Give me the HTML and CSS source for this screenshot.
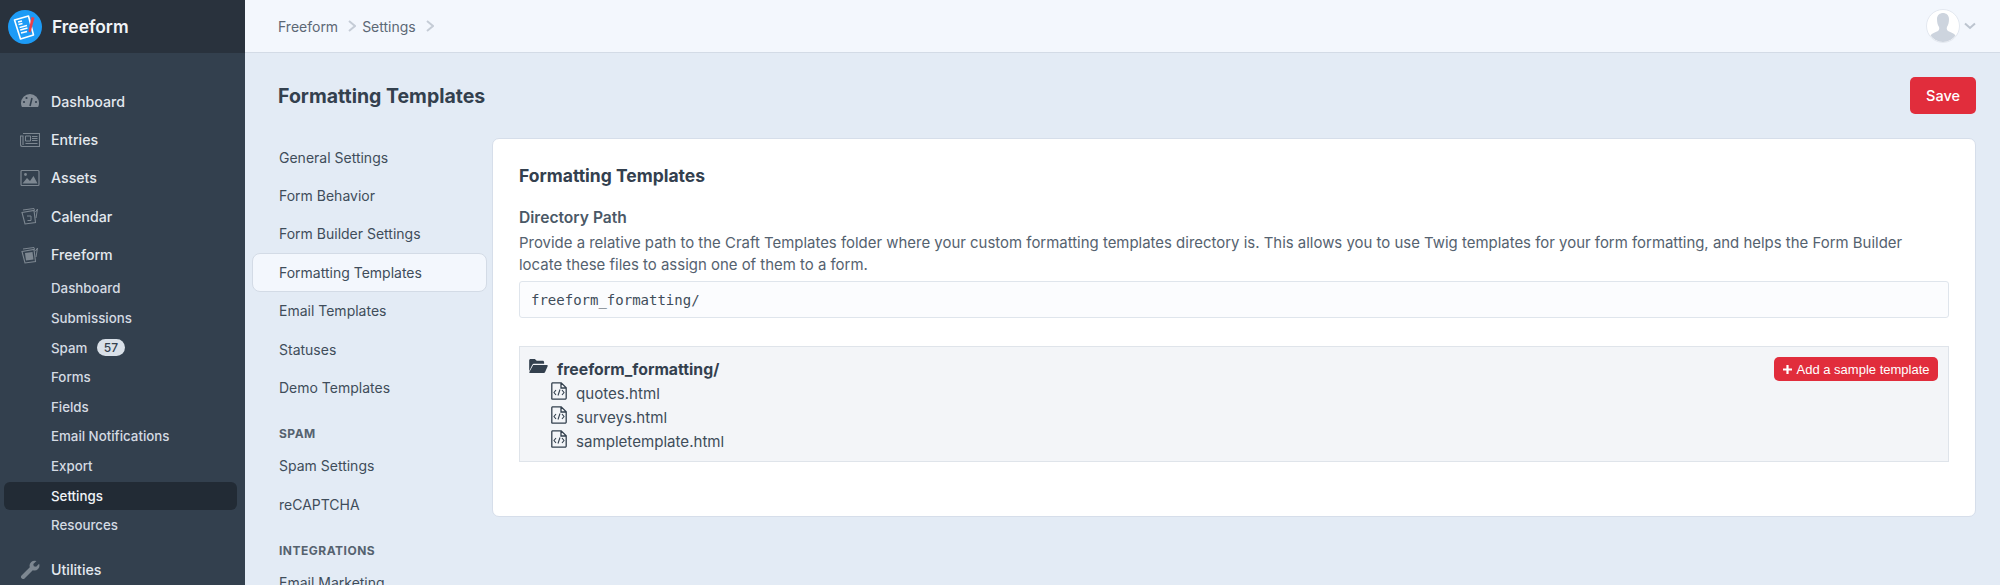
FILE: index.html
```html
<!doctype html>
<html lang="en">
<head>
    <title>Formatting Templates</title>
    <link rel="stylesheet" href="styles.css">
</head>
<body>
    <div class="app">
        <aside class="sidebar">
            <div class="brand">
                <svg class="logo" viewBox="0 0 34 34">
                    <circle cx="17" cy="17" r="17" fill="#1d9bf6"/>
                    <path d="M6.5 10 20.5 6 25.5 25 12.500 29z" fill="#1d9bf6" stroke="#fff" stroke-width="1.6" stroke-linejoin="round"/>
                    <path d="M10 12 14 11M10.500 14.500 14.500 13.500M11.500 17.500 19 15.500M12.200 20 19.500 18M13 23 19 21.500" stroke="#fff" stroke-width="1.3"/>
                    <path d="M23.500 7 26.500 7.800 22.500 22.500 20.500 21.500z" fill="#e8404a"/>
                </svg>
                <span class="brand-name">Freeform</span>
            </div>
            <nav class="main-nav">
                <a class="nav-item">
                    <svg class="nav-icon" viewBox="0 0 20 20"><path d="M10 3a9 9 0 0 0-9 9c0 1.500.4 3 1 4h16c.6-1 1-2.500 1-4a9 9 0 0 0-9-9z" fill="#858e98"/><path d="M10 15 12 7" stroke="#33404e" stroke-width="1.6"/><circle cx="4" cy="11" r="1.1" fill="#33404e"/><circle cx="6.500" cy="7" r="1.1" fill="#33404e"/><circle cx="16" cy="11" r="1.1" fill="#33404e"/></svg>
                    Dashboard
                </a>
                <a class="nav-item">
                    <svg class="nav-icon" viewBox="0 0 20 20"><path d="M3 3.500h16.500v13H2.500a2 2 0 0 1-2-2V6H3v9" fill="none" stroke="#7d8791" stroke-width="1.1"/><path d="M5.500 6h5v5h-5z" fill="none" stroke="#7d8791"/><path d="M12 6.500h5.500M12 8.500h5.500M12 10.500h5.500M5.500 13.500h12" stroke="#7d8791"/></svg>
                    Entries
                </a>
                <a class="nav-item">
                    <svg class="nav-icon" viewBox="0 0 20 20"><rect x="1" y="2.500" width="18" height="15" rx="1" fill="none" stroke="#7d8791" stroke-width="1.2"/><path d="M2.500 15.500 7 10l3 3 3.500-5 4 7.500z" fill="#7d8791"/><circle cx="5.500" cy="6.500" r="1.4" fill="#7d8791"/></svg>
                    Assets
                </a>
                <a class="nav-item">
                    <svg class="nav-icon" viewBox="0 0 20 20"><path d="M2 6.500 14 4.500 15.500 16.500 5 18z" fill="none" stroke="#7d8791" stroke-width="1.1"/><path d="M3 4 14 2.500 14.500 4.500M15.500 6 17.500 3 16 12" fill="none" stroke="#7d8791"/><path d="M7 10h4v4.500H7.500" fill="none" stroke="#7d8791"/></svg>
                    Calendar
                </a>
                <a class="nav-item">
                    <svg class="nav-icon" viewBox="0 0 20 20"><path d="M2 6.500 14 4.500 15.500 16.500 5 18z" fill="none" stroke="#7d8791" stroke-width="1.1"/><path d="M3 4 14 2.500 14.500 4.500M15.500 6 17.500 3 16 12" fill="none" stroke="#7d8791"/><path d="M5 8 12.500 7 13.500 14.500 6 15.500z" fill="#7d8791"/></svg>
                    Freeform
                </a>
            </nav>
            <nav class="sub-nav">
                <a class="sub-item">Dashboard</a>
                <a class="sub-item">Submissions</a>
                <a class="sub-item">Spam <span class="badge">57</span></a>
                <a class="sub-item">Forms</a>
                <a class="sub-item">Fields</a>
                <a class="sub-item">Email Notifications</a>
                <a class="sub-item">Export</a>
                <a class="sub-item sub-active">Settings</a>
                <a class="sub-item">Resources</a>
            </nav>
            <a class="nav-item nav-utilities">
                <svg class="nav-icon" viewBox="0 0 20 20"><path d="M1.500 16.500 9.800 8.200a5 5 0 0 1 6.700-6.100L13.300 5l.5 2.300 2.300.5 3-3.100a5 5 0 0 1-6.300 6.500l-8 8a2 2 0 0 1-3.300-2.700z" fill="#7d8791"/></svg>
                Utilities
            </a>
        </aside>

        <div class="main">
            <header class="topbar">
                <div class="crumbs">
                    <span>Freeform</span>
                    <svg class="crumb-sep" viewBox="0 0 8 12"><path d="M1 1 7 6l-6 5" fill="none" stroke="#c5ccd6" stroke-width="2"/></svg>
                    <span>Settings</span>
                    <svg class="crumb-sep" viewBox="0 0 8 12"><path d="M1 1 7 6l-6 5" fill="none" stroke="#c5ccd6" stroke-width="2"/></svg>
                </div>
                <div class="user">
                    <svg class="avatar" viewBox="0 0 34 34">
                        <circle cx="17" cy="17" r="16.500" fill="#fff" stroke="#e3e8f0"/>
                        <path d="M11 10c0-4 3-6 6-6s6 2 6 6c0 3-.6 6-2 8-.5 1-.4 3 1 4 3 1.600 6 2 7.500 4.500A16 16 0 0 1 17 33 16 16 0 0 1 4.500 26.500C6 24 9 23.600 12 22c1.400-1 1.500-3 1-4-1.400-2-2-5-2-8z" fill="#cdd4de"/>
                    </svg>
                    <svg class="caret" viewBox="0 0 12 8"><path d="M1 1.500 6 6l5-4.500" fill="none" stroke="#bcc4cf" stroke-width="2"/></svg>
                </div>
            </header>

            <div class="page-head">
                <h1>Formatting Templates</h1>
                <button class="btn-save">Save</button>
            </div>

            <div class="content">
                <nav class="settings-nav">
                    <a class="set-item">General Settings</a>
                    <a class="set-item">Form Behavior</a>
                    <a class="set-item">Form Builder Settings</a>
                    <a class="set-item set-active">Formatting Templates</a>
                    <a class="set-item">Email Templates</a>
                    <a class="set-item">Statuses</a>
                    <a class="set-item">Demo Templates</a>
                    <h5 class="set-heading">SPAM</h5>
                    <a class="set-item">Spam Settings</a>
                    <a class="set-item">reCAPTCHA</a>
                    <h5 class="set-heading">INTEGRATIONS</h5>
                    <a class="set-item">Email Marketing</a>
                </nav>

                <section class="card">
                    <h2>Formatting Templates</h2>
                    <label class="field-label">Directory Path</label>
                    <p class="field-help">Provide a relative path to the Craft Templates folder where your custom formatting templates directory is. This allows you to use Twig templates for your form formatting, and helps the Form Builder locate these files to assign one of them to a form.</p>
                    <div class="path-input">freeform_formatting/</div>

                    <div class="file-box">
                        <button class="btn-add">
                            <svg class="plus" viewBox="0 0 9 9"><path d="M4.500 0v9M0 4.500h9" stroke="#fff" stroke-width="2.2"/></svg>
                            Add a sample template
                        </button>
                        <div class="folder-row">
                            <svg class="folder-icon" viewBox="0 0 20 15"><path d="M0 13V1.500C0 .7.700 0 1.500 0h4.600l2 2h6.400c.8 0 1.500.7 1.500 1.500V5H5.500c-1 0-1.800.5-2.300 1.300z" fill="#33404e"/><path d="M4.300 6.500H19c.7 0 1.100.7.800 1.300l-2.700 6c-.3.700-1 1.200-1.800 1.200H1c-.7 0-1.100-.7-.8-1.200z" fill="#33404e"/></svg>
                            freeform_formatting/
                        </div>
                        <div class="file-row">
                            <svg class="file-icon" viewBox="0 0 16 18"><path d="M1.500.8h8.700l5 5V16a1.200 1.200 0 0 1-1.200 1.200H1.500A1 1 0 0 1 .8 16V1.800A1 1 0 0 1 1.500.8zM10 1v5h5" fill="none" stroke="#33404e" stroke-width="1.3"/><path d="M5 8 3 10.500 5 13M11 8l2 2.500L11 13M9 7.500 7 13.500" fill="none" stroke="#33404e" stroke-width="1.1"/></svg>
                            quotes.html
                        </div>
                        <div class="file-row">
                            <svg class="file-icon" viewBox="0 0 16 18"><path d="M1.500.8h8.700l5 5V16a1.200 1.200 0 0 1-1.200 1.200H1.500A1 1 0 0 1 .8 16V1.800A1 1 0 0 1 1.500.8zM10 1v5h5" fill="none" stroke="#33404e" stroke-width="1.3"/><path d="M5 8 3 10.500 5 13M11 8l2 2.500L11 13M9 7.500 7 13.500" fill="none" stroke="#33404e" stroke-width="1.1"/></svg>
                            surveys.html
                        </div>
                        <div class="file-row">
                            <svg class="file-icon" viewBox="0 0 16 18"><path d="M1.500.8h8.700l5 5V16a1.200 1.200 0 0 1-1.200 1.200H1.500A1 1 0 0 1 .8 16V1.800A1 1 0 0 1 1.500.8zM10 1v5h5" fill="none" stroke="#33404e" stroke-width="1.3"/><path d="M5 8 3 10.500 5 13M11 8l2 2.500L11 13M9 7.500 7 13.500" fill="none" stroke="#33404e" stroke-width="1.1"/></svg>
                            sampletemplate.html
                        </div>
                    </div>
                </section>
            </div>
        </div>
    </div>
</body>
</html>
```

FILE: styles.css
```css
* {
    box-sizing: border-box;
}
html, body {
    margin: 0;
    height: 585px;
    overflow: hidden;
}
body {
    font-family: Inter, "Liberation Sans", sans-serif;
    font-size: 14px;
    color: #3f4d5a;
    background: #e3ebf5;
}
.app {
    display: flex;
    height: 585px;
}

/* sidebar */
.sidebar {
    width: 245px;
    flex: none;
    background: #33404e;
    color: #e4e9ef;
    overflow: hidden;
}
.brand {
    display: flex;
    align-items: center;
    gap: 10px;
    height: 53px;
    padding-left: 8px;
    background: #29323d;
}
.logo {
    width: 34px;
    height: 34px;
}
.brand-name {
    font-size: 17.4px;
    font-weight: 600;
    color: #f1f4f8;
}
.main-nav {
    padding-top: 29px;
}
.nav-item {
    display: flex;
    align-items: center;
    height: 38.4px;
    padding-left: 20px;
    font-size: 14.2px;
    font-weight: 500;
}
.nav-icon {
    width: 20px;
    height: 20px;
    margin-right: 11px;
}
.sub-nav {
    padding: .5px 8px 0 4px;
}
.sub-item {
    display: flex;
    align-items: center;
    height: 28px;
    margin-bottom: 1.6px;
    padding-left: 47px;
    font-size: 13.3px;
    font-weight: 500;
    color: #d5dbe3;
    border-radius: 6px;
}
.sub-active {
    background: #222b35;
    color: #f1f4f8;
}
.badge {
    margin-left: 10px;
    padding: 0 6.5px;
    font-size: 12px;
    line-height: 17px;
    color: #33404e;
    background: #d9e0e8;
    border-radius: 9px;
}
.nav-utilities {
    margin-top: 11px;
}

/* main column */
.main {
    flex: 1;
    min-width: 0;
}
.topbar {
    display: flex;
    align-items: center;
    justify-content: space-between;
    height: 53px;
    padding: 0 24px 0 33px;
    background: #f3f7fd;
    border-bottom: 1px solid #d3dbe6;
}
.crumbs {
    display: flex;
    align-items: center;
    font-size: 14px;
    color: #5c6875;
}
.crumb-sep {
    width: 8px;
    height: 12px;
    margin: 0 6px 0 10px;
}
.user {
    display: flex;
    align-items: center;
    gap: 4px;
}
.avatar {
    width: 34px;
    height: 34px;
}
.caret {
    width: 12px;
    height: 8px;
}
.page-head {
    display: flex;
    align-items: center;
    justify-content: space-between;
    height: 85px;
    padding: 0 24px 0 33px;
}
.page-head h1 {
    margin: 0;
    font-size: 19.5px;
    font-weight: 700;
    color: #33404e;
}
.btn-save {
    width: 66px;
    height: 37px;
    border: 0;
    border-radius: 5px;
    font-family: inherit;
    font-size: 14.5px;
    font-weight: 500;
    color: #fff;
    background: #e12d3c;
}
.content {
    display: flex;
    gap: 5px;
    padding: 0 24px 0 7px;
}

/* settings menu */
.settings-nav {
    width: 235px;
    flex: none;
    display: flex;
    flex-direction: column;
}
.set-item {
    display: flex;
    align-items: center;
    flex: none;
    height: 38.4px;
    padding-left: 27px;
    font-size: 14px;
    color: #3f4d5a;
}
.set-active {
    background: #f3f7fd;
    border: 1px solid #d3dbe6;
    border-radius: 8px;
    padding-left: 26px;
}
.set-heading {
    margin: 0;
    padding: 19px 0 6px 27px;
    font-size: 12px;
    font-weight: 700;
    letter-spacing: .5px;
    color: #55626f;
}

/* card */
.card {
    flex: 1;
    height: 379px;
    padding: 26px;
    background: #fff;
    border: 1px solid #d6deea;
    border-radius: 7px;
}
.card h2 {
    margin: 0 0 21px;
    font-size: 17.5px;
    line-height: 22px;
    font-weight: 700;
    color: #33404e;
}
.field-label {
    display: block;
    font-size: 15.6px;
    line-height: 20px;
    font-weight: 600;
    color: #4a5866;
}
.field-help {
    margin: 3.7px 0 4.5px;
    font-size: 14.95px;
    line-height: 22.5px;
    color: #55626f;
}
.path-input {
    display: flex;
    align-items: center;
    width: 100%;
    height: 37px;
    padding: 0 11px;
    font-family: "DejaVu Sans Mono", monospace;
    font-size: 14px;
    color: #3f4d5a;
    background: #fbfcfe;
    border: 1px solid #dfe5ec;
    border-radius: 3px;
}
.file-box {
    position: relative;
    height: 116px;
    margin-top: 28px;
    padding: 10px 8px 10px 9px;
    background: #f3f5f8;
    border: 1px solid #dfe4ea;
}
.btn-add {
    position: absolute;
    top: 10px;
    right: 10px;
    display: flex;
    align-items: center;
    gap: 5px;
    height: 24px;
    padding: 0 8.5px;
    border: 0;
    border-radius: 5px;
    font-family: "Liberation Sans", sans-serif;
    font-size: 13px;
    color: #fff;
    background: #e12d3c;
}
.plus {
    width: 9px;
    height: 9px;
}
.folder-row {
    display: flex;
    align-items: center;
    gap: 9px;
    height: 24px;
    font-size: 15.8px;
    font-weight: 700;
    color: #33404e;
}
.folder-icon {
    width: 19px;
    height: 14px;
    margin-bottom: 6px;
}
.file-row {
    display: flex;
    align-items: center;
    gap: 9px;
    height: 24px;
    padding-left: 22px;
    font-size: 15.1px;
    color: #3f4d5a;
}
.file-icon {
    width: 16px;
    height: 18px;
    margin-bottom: 4px;
}
```
